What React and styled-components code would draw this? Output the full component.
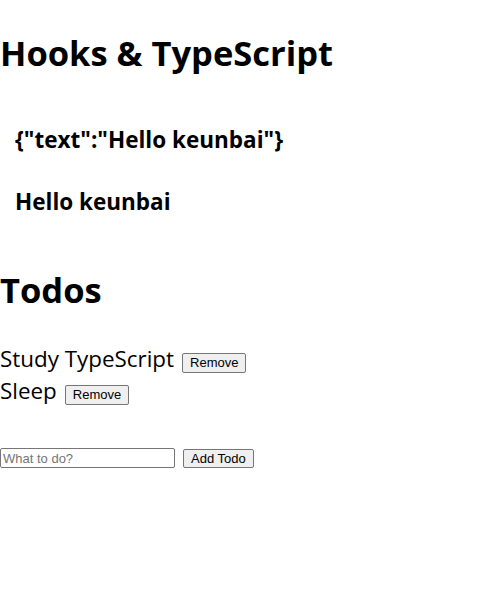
import React, { useState } from 'react';
import styled, { createGlobalStyle } from 'styled-components';

const GlobalStyle = createGlobalStyle`
    body {
        margin: 0;
        background: #fff;
        color: #000;
        font-family: "Open Sans", "Noto Sans", sans-serif;
    }
`;

const Title = styled.h1`
    font-size: 34.5px;
    line-height: 42px;
    font-weight: 700;
    margin: ${(props) => props.$top}px 0 0;
`;

const Greeting = styled.div`
    display: flex;
    flex-direction: column;
    gap: 32px;
    padding: 0 15px;
    margin: 51px 0 52px;

    h2 {
        font-size: 22.5px;
        line-height: 30px;
        font-weight: 700;
        margin: 0;
    }
`;

const TodoList = styled.div`
    margin-top: 32px;
`;

const Item = styled.div`
    display: flex;
    align-items: baseline;
    gap: 8px;
    font-size: 22.4px;
    line-height: 32px;
`;

const SmallButton = styled.button`
    font-family: "Liberation Sans", Arial, sans-serif;
    font-size: 13px;
    padding: 1px 7px;
    border: 1px solid #767676;
    border-radius: 2px;
    background: #efefef;
    color: #000;
    height: ${(props) => props.$height || 20}px;
`;

const Form = styled.form`
    display: flex;
    align-items: center;
    gap: 8px;
    margin-top: 41px;
`;

const Input = styled.input`
    font-family: "Liberation Sans", Arial, sans-serif;
    font-size: 13px;
    width: 175px;
    height: 20px;
    box-sizing: border-box;
    padding: 1px 2px;
    border: 1px solid #767676;
    border-radius: 2px;

    &::placeholder {
        color: #757575;
    }
`;

function App() {
    const [todos, setTodos] = useState(['Study TypeScript', 'Sleep']);
    const [text, setText] = useState('');

    const addTodo = (e) => {
        e.preventDefault();
        if (!text) return;
        setTodos((prev) => [...prev, text]);
        setText('');
    };

    return (
        <>
            <GlobalStyle />
            <Title $top={32}>Hooks &amp; TypeScript</Title>
            <Greeting>
                <h2>{JSON.stringify({ text: 'Hello keunbai' })}</h2>
                <h2>Hello keunbai</h2>
            </Greeting>
            <Title $top={0}>Todos</Title>
            <TodoList>
                {todos.map((todo, i) => (
                    <Item key={i}>
                        {todo}
                        <SmallButton type="button" onClick={() => setTodos((prev) => prev.filter((_, j) => j !== i))}>
                            Remove
                        </SmallButton>
                    </Item>
                ))}
            </TodoList>
            <Form onSubmit={addTodo}>
                <Input placeholder="What to do?" value={text} onChange={(e) => setText(e.target.value)} />
                <SmallButton type="submit" $height={19}>Add Todo</SmallButton>
            </Form>
        </>
    );
}

export default App;
